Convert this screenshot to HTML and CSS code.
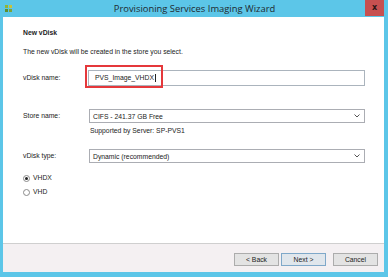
FILE: index.html
```html
<!DOCTYPE html>
<html lang="en">

<head>
    <meta charset="UTF-8">
    <title>Provisioning Services Imaging Wizard</title>
    <link rel="stylesheet" href="styles.css">
</head>

<body>

    <div class="window">
        <div class="titlebar">
            <div class="app-icon">
                <svg width="7" height="7" viewBox="0 0 7 7">
                    <rect x="0" y="0" width="3" height="3" fill="#8fb43a"/>
                    <rect x="4" y="0" width="3" height="3" fill="#c9c23a"/>
                    <rect x="0" y="4" width="3" height="3" fill="#5e8f2e"/>
                    <rect x="4" y="4" width="3" height="3" fill="#7aa33a"/>
                </svg>
            </div>
            <div class="title">Provisioning Services Imaging Wizard</div>
            <div class="close">x</div>
        </div>

        <div class="client">
            <div class="content">
                <div class="heading">New vDisk</div>
                <div class="desc">The new vDisk will be created in the store you select.</div>

                <div class="row name-row">
                    <label>vDisk name:</label>
                    <div class="field">
                        <div class="textbox">PVS_Image_VHDX<span class="caret"></span></div>
                        <span class="highlight"></span>
                    </div>
                </div>

                <div class="row store-row">
                    <label>Store name:</label>
                    <div class="select">
                        <span>CIFS - 241.37 GB Free</span>
                        <svg class="chevron" width="6" height="4" viewBox="0 0 6 4"><path d="M0.5 0.5 L3 3 L5.5 0.5" fill="none" stroke="#555" stroke-width="1"/></svg>
                    </div>
                </div>
                <div class="hint">Supported by Server: SP-PVS1</div>

                <div class="row type-row">
                    <label>vDisk type:</label>
                    <div class="select">
                        <span>Dynamic (recommended)</span>
                        <svg class="chevron" width="6" height="4" viewBox="0 0 6 4"><path d="M0.5 0.5 L3 3 L5.5 0.5" fill="none" stroke="#555" stroke-width="1"/></svg>
                    </div>
                </div>

                <div class="radio first"><span class="dot checked"></span>VHDX</div>
                <div class="radio"><span class="dot"></span>VHD</div>
            </div>

            <div class="footer">
                <button>&lt; Back</button>
                <button class="default">Next &gt;</button>
                <button class="cancel">Cancel</button>
            </div>
        </div>
    </div>

</body>

</html>
```

FILE: styles.css
```css
body {
    margin: 0;
    padding: 0;
    font-family: 'Liberation Sans', Arial, sans-serif;
    font-size: 6.8px;
    color: #222;
}

.window {
    width: 388px;
    height: 277px;
    background-color: #5cc6e8;
    display: flex;
    flex-direction: column;
}

.titlebar {
    height: 17px;
    display: flex;
    align-items: center;
    padding: 0 4px 0 5px;
    flex-shrink: 0;
}

.app-icon {
    width: 19px;
    height: 17px;
    display: flex;
    align-items: center;
}

.title {
    flex: 1;
    text-align: center;
    font-family: 'Open Sans', 'Liberation Sans', sans-serif;
    font-size: 9.4px;
    color: #1e2a30;
}

.close {
    width: 19px;
    height: 16px;
    align-self: flex-start;
    background-color: #c75050;
    color: #2a1515;
    font-family: 'DejaVu Sans', sans-serif;
    font-weight: bold;
    font-size: 8px;
    line-height: 15px;
    text-align: center;
}

.client {
    flex: 1;
    margin: 0 4px 5px 3px;
    background-color: #fff;
    display: flex;
    flex-direction: column;
}

.content {
    flex: 1;
    padding: 0 19px 0 20px;
}

.heading {
    font-weight: bold;
    line-height: 10px;
    margin-top: 11px;
}

.desc {
    line-height: 10px;
    margin-top: 9px;
}

.row {
    display: grid;
    grid-template-columns: 65px 1fr;
    align-items: center;
}

.row label {
    line-height: 10px;
}

.name-row {
    margin-top: 13px;
}

.field {
    position: relative;
    height: 16px;
}

.textbox {
    box-sizing: border-box;
    height: 16px;
    padding-left: 6px;
    border: 1px solid #abb4bd;
    line-height: 14px;
    display: flex;
    align-items: center;
    background: #fff;
}

.caret {
    width: 1px;
    height: 8px;
    margin-left: 1px;
    background: #222;
}

.highlight {
    position: absolute;
    left: -3px;
    top: -5px;
    width: 78px;
    height: 23px;
    box-sizing: border-box;
    border: 2px solid #e5383b;
}

.select {
    box-sizing: border-box;
    height: 14px;
    margin-left: 1px;
    border: 1px solid #abadb3;
    display: flex;
    align-items: center;
    justify-content: space-between;
    padding: 0 4px 0 3px;
    background: #fff;
}

.store-row {
    margin-top: 23px;
}

.hint {
    line-height: 10px;
    margin-top: 3px;
    padding-left: 67px;
}

.type-row {
    margin-top: 13px;
}

.radio {
    display: flex;
    align-items: center;
    line-height: 10px;
    margin-top: 4px;
}

.radio.first {
    margin-top: 10px;
}

.dot {
    box-sizing: border-box;
    width: 7px;
    height: 7px;
    border: 1px solid #8a8a8a;
    border-radius: 50%;
    margin-right: 3px;
    display: flex;
    align-items: center;
    justify-content: center;
    background: #fff;
}

.dot.checked::after {
    content: "";
    width: 3px;
    height: 3px;
    border-radius: 50%;
    background: #222;
}

.footer {
    height: 29px;
    box-sizing: border-box;
    border-top: 1px solid #cfcfcf;
    background-color: #f4f0f2;
    display: flex;
    justify-content: flex-end;
    align-items: flex-start;
    padding: 9px 6px 0 0;
    gap: 2px;
}

button {
    box-sizing: border-box;
    width: 45px;
    height: 13px;
    padding: 0;
    border: 1px solid #acacac;
    background-color: #e3e3e3;
    font-family: inherit;
    font-size: 6.8px;
    color: #222;
}

button.default {
    border-color: #7fa8c9;
    background-color: #e0e6ec;
}

button.cancel {
    margin-left: 5px;
}
```
